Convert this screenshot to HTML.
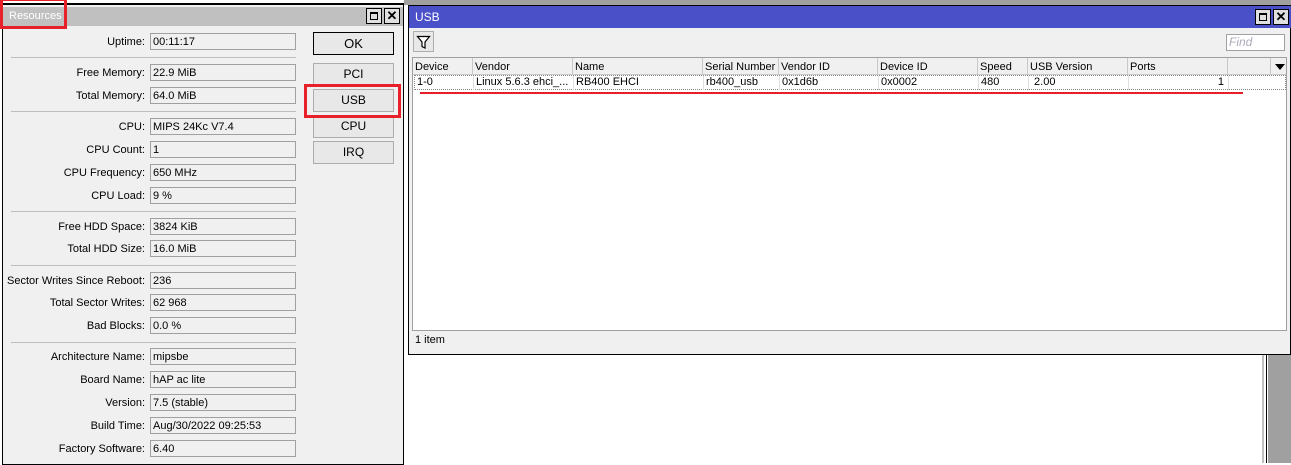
<!DOCTYPE html>
<html><head><meta charset="utf-8"><style>
*{box-sizing:border-box;margin:0;padding:0}
body{width:1291px;height:463px;overflow:hidden;background:#fff;position:relative;font-family:"Liberation Sans",Arial,sans-serif;font-size:11px;color:#000}
.a{position:absolute}
.lbl{position:absolute;right:1146px;text-align:right;white-space:nowrap;font-size:11px;line-height:17px}
.fld{position:absolute;left:150px;width:146px;height:17px;border:1px solid #a0a0a0;background:#f0f0f0;padding-left:2px;line-height:16px;white-space:nowrap}
.sep{position:absolute;left:11px;width:285px;height:1px;background:#bdbdbd}
.btn{position:absolute;left:313px;width:81px;height:23px;border:1px solid #adadad;background:#e8e8e8;text-align:center;line-height:21px;font-size:12px}
.wb{position:absolute;width:16px;height:16px;border:1px solid #000;background:#e0e0e0}
.th{position:absolute;top:0;height:17px;border-right:1px solid #c8c8c8;padding-left:2px;line-height:18px;white-space:nowrap;overflow:hidden}
.td{position:absolute;top:0;height:14px;border-right:1px solid #e0e0e0;padding-left:2px;line-height:13px;white-space:nowrap;overflow:hidden}
</style></head><body>
<div class="a" style="left:404px;top:0;width:887px;height:5px;background:#a0a0a0"></div>
<div class="a" style="left:1262px;top:354px;width:2px;height:109px;background:#c0c0c0"></div>
<div class="a" style="left:1266px;top:354px;width:1px;height:109px;background:#000"></div>
<div class="a" style="left:1268px;top:354px;width:23px;height:109px;background:#a0a0a0"></div>

<div class="a" style="left:2px;top:3px;width:402px;height:462px;border:1px solid #000;border-top:2px solid #000;background:#f0f0f0"></div>
<div class="a" style="left:3px;top:7px;width:400px;height:19px;background:#c0c0c0;color:#fff;font-size:11px;line-height:19px;padding-left:6px">Resources</div>
<div class="wb" style="left:366px;top:8px"><div class="a" style="left:3px;top:3px;width:8px;height:8px;border:1px solid #000;border-top-width:2px"></div></div>
<div class="wb" style="left:384px;top:8px;font-weight:bold;font-size:13px;line-height:14px;text-align:center">✕</div>

<div class="lbl" style="top:34px">Uptime:</div><div class="fld" style="top:33px">00:11:17</div>
<div class="sep" style="top:57px"></div>
<div class="lbl" style="top:65px">Free Memory:</div><div class="fld" style="top:64px">22.9 MiB</div>
<div class="lbl" style="top:88px">Total Memory:</div><div class="fld" style="top:87px">64.0 MiB</div>
<div class="sep" style="top:111px"></div>
<div class="lbl" style="top:119px">CPU:</div><div class="fld" style="top:118px">MIPS 24Kc V7.4</div>
<div class="lbl" style="top:142px">CPU Count:</div><div class="fld" style="top:141px">1</div>
<div class="lbl" style="top:165px">CPU Frequency:</div><div class="fld" style="top:164px">650 MHz</div>
<div class="lbl" style="top:188px">CPU Load:</div><div class="fld" style="top:187px">9 %</div>
<div class="sep" style="top:211px"></div>
<div class="lbl" style="top:219px">Free HDD Space:</div><div class="fld" style="top:218px">3824 KiB</div>
<div class="lbl" style="top:241px">Total HDD Size:</div><div class="fld" style="top:240px">16.0 MiB</div>
<div class="sep" style="top:265px"></div>
<div class="lbl" style="top:273px">Sector Writes Since Reboot:</div><div class="fld" style="top:272px">236</div>
<div class="lbl" style="top:295px">Total Sector Writes:</div><div class="fld" style="top:294px">62 968</div>
<div class="lbl" style="top:318px">Bad Blocks:</div><div class="fld" style="top:317px">0.0 %</div>
<div class="sep" style="top:342px"></div>
<div class="lbl" style="top:349px">Architecture Name:</div><div class="fld" style="top:348px">mipsbe</div>
<div class="lbl" style="top:372px">Board Name:</div><div class="fld" style="top:371px">hAP ac lite</div>
<div class="lbl" style="top:395px">Version:</div><div class="fld" style="top:394px">7.5 (stable)</div>
<div class="lbl" style="top:418px">Build Time:</div><div class="fld" style="top:417px">Aug/30/2022 09:25:53</div>
<div class="lbl" style="top:441px">Factory Software:</div><div class="fld" style="top:440px">6.40</div>

<div class="btn" style="top:32px;border:1px solid #000;font-size:13px">OK</div>
<div class="btn" style="top:63px">PCI</div>
<div class="btn" style="top:89px">USB</div>
<div class="btn" style="top:115px">CPU</div>
<div class="btn" style="top:141px">IRQ</div>

<div class="a" style="left:408px;top:5px;width:883px;height:350px;border:1px solid #000;background:#f0f0f0"></div>
<div class="a" style="left:409px;top:6px;width:882px;height:22px;background:#4a50c8;color:#fff;line-height:22px;padding-left:6px;font-size:12px">USB</div>
<div class="wb" style="left:1255px;top:9px"><div class="a" style="left:3px;top:3px;width:8px;height:8px;border:1px solid #000;border-top-width:2px"></div></div>
<div class="wb" style="left:1273px;top:9px;font-weight:bold;font-size:13px;line-height:14px;text-align:center">✕</div>
<div class="a" style="left:413px;top:31px;width:21px;height:21px;border:1px solid #adadad;background:#e8e8e8">
<svg width="19" height="19" viewBox="0 0 19 19"><path d="M3.5 4.5h12l-4.5 5.5v6l-3-1.5v-4.5z" fill="#fff" stroke="#000" stroke-width="1.2"/></svg></div>
<div class="a" style="left:1226px;top:34px;width:59px;height:17px;border:1px solid #a0a0a0;background:#fff;color:#aab;font-style:italic;padding-left:2px;line-height:15px;font-size:12px">Find</div>

<div class="a" style="left:412px;top:57px;width:875px;height:274px;border:1px solid #a0a0a0;background:#fff">
 <div class="a" style="left:0;top:0;width:873px;height:17px;background:#f0f0f0;border-bottom:1px solid #c8c8c8">
  <div class="th" style="left:0;width:60px">Device</div>
  <div class="th" style="left:60px;width:100px">Vendor</div>
  <div class="th" style="left:160px;width:130px">Name</div>
  <div class="th" style="left:290px;width:76px">Serial Number</div>
  <div class="th" style="left:366px;width:99px">Vendor ID</div>
  <div class="th" style="left:465px;width:100px">Device ID</div>
  <div class="th" style="left:565px;width:50px">Speed</div>
  <div class="th" style="left:615px;width:100px">USB Version</div>
  <div class="th" style="left:715px;width:100px">Ports</div>
  <div class="th" style="left:815px;width:43px"></div>
  <div class="a" style="left:862px;top:6px;width:0;height:0;border-left:5px solid transparent;border-right:5px solid transparent;border-top:6px solid #000"></div>
 </div>
 <div class="a" style="left:1px;top:17px;width:872px;height:15px;border:1px dotted #888">
  <div class="td" style="left:0;width:59px">1-0</div>
  <div class="td" style="left:59px;width:100px">Linux 5.6.3 ehci_...</div>
  <div class="td" style="left:159px;width:130px">RB400 EHCI</div>
  <div class="td" style="left:289px;width:76px">rb400_usb</div>
  <div class="td" style="left:365px;width:99px">0x1d6b</div>
  <div class="td" style="left:464px;width:100px">0x0002</div>
  <div class="td" style="left:564px;width:50px">480</div>
  <div class="td" style="left:614px;width:100px">&nbsp;2.00</div>
  <div class="td" style="left:714px;width:100px;text-align:right;padding-right:4px">1</div>
 </div>
</div>
<div class="a" style="left:420px;top:92px;width:823px;height:2px;background:#e8202a"></div>
<div class="a" style="left:412px;top:331px;width:875px;height:18px;line-height:18px;padding-left:3px;font-size:11px">1 item</div>

<div class="a" style="left:0;top:-2px;width:67px;height:31px;border:3px solid #e8202a"></div>
<div class="a" style="left:304px;top:84px;width:97px;height:34px;border:3px solid #e8202a"></div>
</body></html>
